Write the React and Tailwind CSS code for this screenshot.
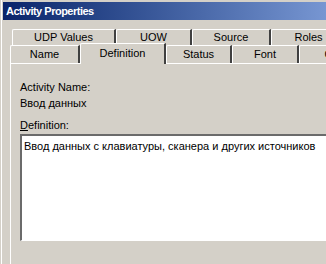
export default function App() {
  const font = { fontFamily: '"Liberation Sans", Tahoma, Arial, sans-serif' };

  const topRow = [
    { label: 'UDP Values', w: 'w-[104px]' },
    { label: 'UOW', w: 'w-[76px]' },
    { label: 'Source', w: 'w-[79px]' },
    { label: 'Roles', w: 'w-[76px]' },
  ];
  const bottomRow = [
    { label: 'Name', w: 'w-[70px]' },
    { label: 'Definition', w: 'w-[86px]', active: true },
    { label: 'Status', w: 'w-[66px]' },
    { label: 'Font', w: 'w-[67px]' },
    { label: 'C', w: 'w-[60px]' },
  ];

  return (
    <div
      className="w-[326px] h-[264px] overflow-hidden bg-[#d4d0c8] text-[11px] text-black pl-px"
      style={font}
    >
      <div className="h-full border-l border-white pt-[2px]">
        {/* заголовок окна */}
        <div className="h-[18px] ml-px flex items-center pl-[3px] bg-gradient-to-r from-[#0a246a] to-[#7796d2]">
          <span className="text-white font-bold text-[11px] tracking-[-0.5px] leading-none">Activity Properties</span>
        </div>

        {/* вкладки */}
        <div className="mt-[9px] pl-[9px] w-[400px]">
          <div className="flex h-[16px] ml-[1px]">
            {topRow.map((t) => (
              <div
                key={t.label}
                className={`${t.w} shrink-0 h-full flex items-center justify-center border-t border-l border-white border-r-2 border-r-[#404040] rounded-tl-[2px]`}
              >
                <span className="leading-none">{t.label}</span>
              </div>
            ))}
          </div>
          <div className="flex items-end h-[18px] -ml-[1px]">
            {bottomRow.map((t) =>
              t.active ? (
                <div
                  key={t.label}
                  className={`${t.w} shrink-0 h-[21px] -mb-px relative z-10 bg-[#d4d0c8] flex items-start justify-center pt-[4px] border-t border-l border-white border-r-2 border-r-[#404040] rounded-tl-[2px]`}
                >
                  <span className="leading-none">{t.label}</span>
                </div>
              ) : (
                <div
                  key={t.label}
                  className={`${t.w} shrink-0 h-full flex items-center justify-center border-t border-l border-white border-r-2 border-r-[#404040] rounded-tl-[2px]`}
                >
                  <span className="leading-none">{t.label}</span>
                </div>
              )
            )}
          </div>

          {/* страница вкладки */}
          <div className="-ml-[1px] h-[220px] border-t border-l border-white pl-[9px] pt-[18px]">
            <div className="leading-none h-[13px]">Activity Name:</div>
            <div className="leading-none h-[13px] mt-[3px]">Ввод данных</div>
            <div className="leading-none h-[13px] mt-[9px]">
              <span className="underline underline-offset-1">D</span>efinition:
            </div>
            <div className="mt-[1px] h-[107px] border-t-2 border-l-2 border-t-[#6b6b6b] border-l-[#6b6b6b] border-b border-b-white bg-white pl-[2px] pt-[2px]">
              <span className="leading-none">Ввод данных с клавиатуры, сканера и других источников</span>
            </div>
          </div>
        </div>
      </div>
    </div>
  );
}
